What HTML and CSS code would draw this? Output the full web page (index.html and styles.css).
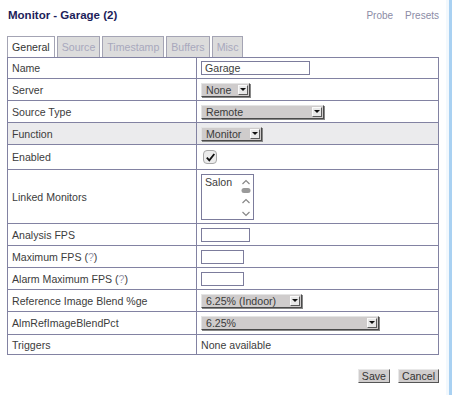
FILE: index.html
```html
<!DOCTYPE html>
<html>
  <head>
    <title>Monitor - Garage (2)</title>
    <link rel="stylesheet" href="styles.css">
  </head>
  <body>
    <div class="page">
      <div class="header">
        <h2 class="title">Monitor - Garage (2)</h2>
        <div class="links">
          <a href="#">Probe</a>
          <a href="#">Presets</a>
        </div>
      </div>

      <div class="tabs">
        <span class="tab active"><span class="tab-label">General</span></span>
        <span class="tab">Source</span>
        <span class="tab">Timestamp</span>
        <span class="tab">Buffers</span>
        <span class="tab">Misc</span>
      </div>

      <table class="settings">
        <tr>
          <td class="label">Name</td>
          <td><span class="text-input name-input">Garage</span></td>
        </tr>
        <tr>
          <td class="label">Server</td>
          <td><span class="select w-49">None<span class="arrow"></span></span></td>
        </tr>
        <tr>
          <td class="label">Source Type</td>
          <td><span class="select w-123">Remote<span class="arrow"></span></span></td>
        </tr>
        <tr class="shaded">
          <td class="label">Function</td>
          <td><span class="select w-61">Monitor<span class="arrow"></span></span></td>
        </tr>
        <tr class="row-enabled">
          <td class="label">Enabled</td>
          <td>
            <span class="checkbox">
              <svg width="11" height="11" viewBox="0 0 11 11">
                <path d="M1.8 5.6 L4.3 8.3 L9.3 2" fill="none" stroke="#111" stroke-width="1.8"/>
              </svg>
            </span>
          </td>
        </tr>
        <tr class="row-linked">
          <td class="label">Linked Monitors</td>
          <td>
            <div class="listbox">
              <span class="option">Salon</span>
              <svg class="scroller" width="10" height="42" viewBox="0 0 10 42">
                <path d="M1.5 7 L5 3.5 L8.5 7" fill="none" stroke="#888" stroke-width="1.2"/>
                <rect x="0.5" y="11" width="9" height="5" rx="2.5" fill="#9a9a9a"/>
                <path d="M1.5 26 L5 22.5 L8.5 26" fill="none" stroke="#888" stroke-width="1.2"/>
                <path d="M1.5 35 L5 38.5 L8.5 35" fill="none" stroke="#888" stroke-width="1.2"/>
              </svg>
            </div>
          </td>
        </tr>
        <tr>
          <td class="label">Analysis FPS</td>
          <td><span class="text-input w-49"></span></td>
        </tr>
        <tr>
          <td class="label">Maximum FPS (<span class="help">?</span>)</td>
          <td><span class="text-input w-43"></span></td>
        </tr>
        <tr>
          <td class="label">Alarm Maximum FPS (<span class="help">?</span>)</td>
          <td><span class="text-input w-43"></span></td>
        </tr>
        <tr>
          <td class="label">Reference Image Blend %ge</td>
          <td><span class="select w-101">6.25% (Indoor)<span class="arrow"></span></span></td>
        </tr>
        <tr class="row-almref">
          <td class="label">AlmRefImageBlendPct</td>
          <td><span class="select w-178">6.25%<span class="arrow"></span></span></td>
        </tr>
        <tr class="row-triggers">
          <td class="label">Triggers</td>
          <td>None available</td>
        </tr>
      </table>

      <div class="actions">
        <button class="btn">Save</button>
        <button class="btn">Cancel</button>
      </div>
    </div>
  </body>
</html>
```

FILE: styles.css
```css
html,
body {
  margin: 0;
  background: white;
}
body {
  width: 446px;
  min-height: 395px;
  border-right: 3px solid #f2f8fd;
  box-shadow: 3px 0 0 #a9d1f2;
  font-family: "Liberation Sans", Arial, sans-serif;
  font-size: 10.6px;
  color: #3c3c3c;
}
.page {
  padding: 8px 7px 0 7px;
}
.header {
  display: flex;
  justify-content: space-between;
  align-items: baseline;
}
.title {
  margin: 0 0 0 1px;
  font-size: 11.5px;
  line-height: 15px;
  font-weight: bold;
  color: #1d1d5a;
}
.links {
  display: flex;
  gap: 12px;
  font-size: 10px;
}
.links a {
  color: #8c8ca6;
  text-decoration: none;
}
.tabs {
  display: flex;
  gap: 2px;
  margin-top: 13px;
  height: 21px;
}
.tab {
  display: flex;
  align-items: center;
  padding: 0 4px;
  border: 1px solid #a4a4b4;
  border-bottom: none;
  background: #dcdcdc;
  color: #a8a8bc;
}
.tab.active {
  background: white;
  color: #333;
}
.tab-label {
  padding: 2px 0;
}
.settings {
  width: 432px;
  border-collapse: collapse;
  border: 1px solid #8282a2;
}
.settings td {
  box-sizing: border-box;
  height: 22px;
  padding: 0 4px;
  border: 1px solid #8282a2;
  vertical-align: middle;
}
.settings td.label {
  width: 189px;
}
.settings tr:first-child td {
  height: 21px;
}
.shaded td {
  background: #ebebed;
}
.row-enabled td {
  height: 25px;
}
.row-linked td {
  height: 54px;
}
.row-almref td {
  height: 23px;
}
.row-triggers td {
  height: 20px;
}
.help {
  color: #9a9ab0;
}
.text-input {
  display: block;
  box-sizing: border-box;
  height: 14px;
  padding: 0 3px;
  border: 1px solid #7c7c9c;
  line-height: 12px;
  background: white;
}
.name-input {
  width: 109px;
}
.select {
  display: flex;
  align-items: center;
  justify-content: space-between;
  box-sizing: border-box;
  height: 14px;
  padding: 0 1px 0 4px;
  background: #cfcccc;
  border: 1px solid;
  border-color: #e4e4e4 #4a4a4a #4a4a4a #e4e4e4;
  box-shadow: 1px 1px 0 #888;
  color: #3a3a3a;
  line-height: 12px;
}
.arrow {
  position: relative;
  box-sizing: border-box;
  width: 10px;
  height: 10px;
  background: #e8e8e8;
  border: 1px solid;
  border-color: #fafafa #5a5a5a #5a5a5a #fafafa;
}
.arrow::after {
  content: "";
  position: absolute;
  left: 1px;
  top: 2px;
  border-left: 3px solid transparent;
  border-right: 3px solid transparent;
  border-top: 3px solid #111;
}
.w-43 { width: 43px; }
.w-49 { width: 49px; }
.w-61 { width: 61px; }
.w-101 { width: 101px; }
.w-123 { width: 123px; }
.w-178 { width: 178px; }
.checkbox {
  display: flex;
  align-items: center;
  justify-content: center;
  width: 14px;
  height: 14px;
  margin-left: 2px;
  border: 1px solid #a8a8a8;
  border-radius: 4px;
  background: #ececec;
  box-sizing: border-box;
}
.listbox {
  display: flex;
  justify-content: space-between;
  box-sizing: border-box;
  width: 53px;
  height: 46px;
  padding: 1px 2px 0 3px;
  border: 1px solid #7c7c9c;
}
.option {
  line-height: 13px;
}
.scroller {
  margin-top: 1px;
}
.actions {
  display: flex;
  justify-content: flex-end;
  gap: 8px;
  margin-top: 14px;
}
.btn {
  box-sizing: border-box;
  height: 14px;
  padding: 0 3px;
  font-family: inherit;
  font-size: 10.6px;
  line-height: 12px;
  color: #333;
  background: #d0cdcd;
  border: 1px solid;
  border-color: #e8e8e8 #555 #555 #e8e8e8;
  border-radius: 0;
  cursor: pointer;
}
```
